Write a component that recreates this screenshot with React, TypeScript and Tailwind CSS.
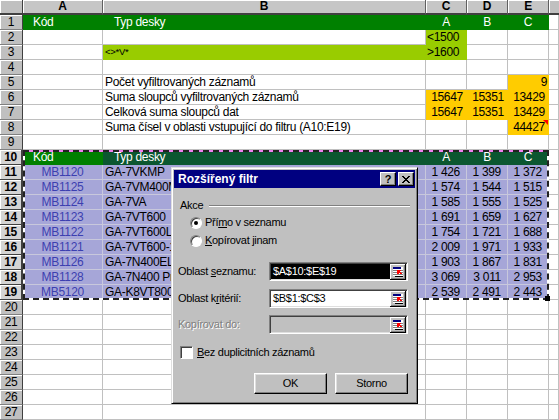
import React from "react";

type Cell = { t?: React.ReactNode; c?: string; tri?: boolean };

const WH = "bg-white border-[#c0c0c0]";
const GR = "bg-[#008000] border-[#008000] text-white";
const SG = "bg-[#0b5730] border-[#0b5730] text-white";
const LG = "bg-[#99cc00] border-[#99cc00]";
const OR = "bg-[#ffcc00] border-[#ffcc00]";
const LV = "bg-[#a6a6d8] border-[#c8c8dc]";

const cellBase =
  "relative h-[15px] border-r border-b whitespace-nowrap overflow-hidden leading-[14px]";

const w = (): Cell => ({ c: WH });

const data: string[][] = [
  ["MB1120", "GA-7VKMP", "1 426", "1 399", "1 372"],
  ["MB1125", "GA-7VM400M", "1 574", "1 544", "1 515"],
  ["MB1124", "GA-7VA", "1 585", "1 555", "1 525"],
  ["MB1123", "GA-7VT600", "1 691", "1 659", "1 627"],
  ["MB1122", "GA-7VT600L", "1 754", "1 721", "1 688"],
  ["MB1121", "GA-7VT600-1", "2 009", "1 971", "1 933"],
  ["MB1126", "GA-7N400EL", "1 903", "1 867", "1 831"],
  ["MB1128", "GA-7N400 Pro", "3 069", "3 011", "2 953"],
  ["MB5120", "GA-K8VT800", "2 539", "2 491", "2 443"],
];

function buildRows(): Record<number, Cell[]> {
  const r: Record<number, Cell[]> = {};
  for (let i = 1; i <= 27; i++) r[i] = [w(), w(), w(), w(), w(), w()];
  r[1] = [
    { t: "Kód", c: `${GR} pl-[10px]` },
    { t: "Typ desky", c: `${GR} pl-[11px]` },
    { t: "A", c: `${GR} text-center` },
    { t: "B", c: `${GR} text-center` },
    { t: "C", c: `${GR} text-center` },
    w(),
  ];
  r[2] = [w(), w(), { t: "<1500", c: `${LG} pl-[1px]` }, w(), w(), w()];
  r[3] = [
    w(),
    { t: "<>*V*", c: `${LG} pl-[2px] text-[9.5px]` },
    { t: ">1600", c: `${LG} pl-[1px]` },
    w(),
    w(),
    w(),
  ];
  r[5] = [w(), { t: "Počet vyfiltrovaných záznamů", c: `${WH} pl-[2px]` }, w(), w(), { t: "9", c: `${OR} text-right pr-[1px]` }, w()];
  r[6] = [
    w(),
    { t: "Suma sloupců vyfiltrovaných záznamů", c: `${WH} pl-[2px]` },
    { t: "15647", c: `${OR} text-right pr-[3px]` },
    { t: "15351", c: `${OR} text-right pr-[3px]` },
    { t: "13429", c: `${OR} text-right pr-[3px]` },
    w(),
  ];
  r[7] = [
    w(),
    { t: "Celková suma sloupců dat", c: `${WH} pl-[2px]` },
    { t: "15647", c: `${OR} text-right pr-[3px]` },
    { t: "15351", c: `${OR} text-right pr-[3px]` },
    { t: "13429", c: `${OR} text-right pr-[3px]` },
    w(),
  ];
  r[8] = [
    w(),
    { t: "Suma čísel v oblasti vstupující do filtru (A10:E19)", c: `${WH} pl-[2px]` },
    w(),
    w(),
    { t: "44427", c: `${OR} text-right pr-[3px]`, tri: true },
    w(),
  ];
  r[10] = [
    { t: "Kód", c: `${GR} pl-[10px]` },
    { t: "Typ desky", c: `${SG} pl-[11px]` },
    { t: "A", c: `${SG} text-center` },
    { t: "B", c: `${SG} text-center` },
    { t: "C", c: `${SG} text-center` },
    w(),
  ];
  data.forEach((d, i) => {
    r[11 + i] = [
      { t: d[0], c: `${LV} text-center text-[#3c40b0]` },
      { t: d[1], c: `${LV} pl-[2px]` },
      { t: d[2], c: `${LV} text-right pr-[6px]` },
      { t: d[3], c: `${LV} text-right pr-[6px]` },
      { t: d[4], c: `${LV} text-right pr-[6px]` },
      w(),
    ];
  });
  return r;
}

function RowHead({ n, sel }: { n: number; sel?: boolean }) {
  return sel ? (
    <div className="h-[15px] bg-[#d4d4d4] border-r-2 border-b border-[#404040] shadow-[inset_1px_1px_0_#ffffff] text-center font-bold leading-[14px]">
      {n}
    </div>
  ) : (
    <div className="h-[15px] bg-[#c0c0c0] border-r border-b border-r-[#404040] border-b-[#808080] shadow-[inset_1px_1px_0_#ffffff] text-center leading-[14px]">
      {n}
    </div>
  );
}

function ColHead({ t }: { t: string }) {
  return (
    <div className="h-[15px] bg-[#c6c6c6] border-r border-b-2 border-r-[#606060] border-b-[#404040] shadow-[inset_1px_1px_0_#ffffff] text-center font-bold leading-[13px]">
      {t}
    </div>
  );
}

function RefIcon() {
  return (
    <svg width="16" height="16" viewBox="0 0 16 16" shapeRendering="crispEdges">
      <rect x="0" y="0" width="16" height="16" fill="#c0c0c0" />
      <rect x="0" y="0" width="15" height="1" fill="#ffffff" />
      <rect x="0" y="0" width="1" height="15" fill="#ffffff" />
      <rect x="15" y="0" width="1" height="16" fill="#000000" />
      <rect x="0" y="15" width="16" height="1" fill="#000000" />
      <rect x="1" y="14" width="14" height="1" fill="#808080" />
      <rect x="14" y="1" width="1" height="14" fill="#808080" />
      <rect x="3" y="3" width="10" height="9" fill="#ffffff" />
      <rect x="3" y="3" width="8" height="2" fill="#000080" />
      <rect x="3" y="6" width="10" height="1" fill="#808080" />
      <rect x="3" y="8" width="10" height="1" fill="#808080" />
      <rect x="3" y="10" width="10" height="1" fill="#808080" />
      <rect x="5" y="12" width="8" height="1" fill="#000000" />
      <path d="M7 6h4v1H9.5l2.5 2.5-1 1-2.5-2.5V10H7z" fill="#ff0000" />
    </svg>
  );
}

function Field({
  label,
  value,
  mode,
}: {
  label: React.ReactNode;
  value?: string;
  mode: "sel" | "norm" | "dis";
}) {
  const inner =
    mode === "sel" ? "bg-black text-white" : mode === "norm" ? "bg-white text-black" : "bg-[#c0c0c0]";
  return (
    <div className="flex items-center h-[19px]">
      <span
        className={`whitespace-nowrap ${mode === "dis" ? "text-[#808080] [text-shadow:1px_1px_0_#ffffff]" : ""}`}
      >
        {label}
      </span>
      <div className="ml-auto w-[139px] h-[19px] border border-t-[#808080] border-l-[#808080] border-r-white border-b-white shadow-[inset_1px_1px_0_#404040,inset_-1px_-1px_0_#dfdfdf] p-[1px] flex">
        <div className={`flex-1 flex items-center pl-[2px] ${inner}`}>{value}</div>
        <div className="w-[16px] h-[15px] bg-[#c0c0c0] flex">
          <RefIcon />
        </div>
      </div>
    </div>
  );
}

function Radio({ on, children }: { on?: boolean; children: React.ReactNode }) {
  return (
    <div className="flex items-center h-[13px] ml-[12px]">
      <div className="w-[12px] h-[12px] rounded-full bg-white border border-t-[#808080] border-l-[#808080] border-r-[#ffffff] border-b-[#ffffff] shadow-[inset_1px_1px_0_#404040] flex items-center justify-center">
        {on && <div className="w-[4px] h-[4px] rounded-full bg-black" />}
      </div>
      <span className="ml-[3px] whitespace-nowrap">{children}</span>
    </div>
  );
}

function WinButton({ children }: { children: React.ReactNode }) {
  return (
    <div className="w-[73px] h-[21px] bg-[#c0c0c0] border border-t-white border-l-white border-r-black border-b-black shadow-[inset_-1px_-1px_0_#808080,inset_1px_1px_0_#dfdfdf] flex items-center justify-center">
      {children}
    </div>
  );
}

function TitleBtn({ children }: { children: React.ReactNode }) {
  return (
    <div className="w-[16px] h-[14px] bg-[#c0c0c0] border border-t-white border-l-white border-r-black border-b-black shadow-[inset_-1px_-1px_0_#808080] flex items-center justify-center text-black font-bold text-[11px] leading-none">
      {children}
    </div>
  );
}

function Dialog() {
  return (
    <div className="absolute left-[171px] top-[167px] w-[247px] h-[237px] bg-[#c0c0c0] border border-t-[#dfdfdf] border-l-[#dfdfdf] border-r-black border-b-black shadow-[inset_1px_1px_0_#ffffff,inset_-1px_-1px_0_#808080] p-[2px] flex flex-col text-[11px] tracking-[-0.3px] text-black">
      <div className="h-[18px] shrink-0 bg-[#000080] flex items-center justify-between pl-[4px] pr-[1px]">
        <span className="text-white font-bold text-[12px] tracking-normal">Rozšířený filtr</span>
        <div className="flex gap-[2px]">
          <TitleBtn>?</TitleBtn>
          <TitleBtn>
            <svg width="8" height="7" viewBox="0 0 8 7" shapeRendering="crispEdges">
              <path d="M0 0h2v1h1v1h2V1h1V0h2v1H7v1H6v1H5v1h1v1h1v1h1v1H6V6H5V5H3v1H2v1H0V6h1V5h1V4h1V3H2V2H1V1H0z" fill="#000" />
            </svg>
          </TitleBtn>
        </div>
      </div>
      <div className="flex flex-col pl-[4px] pr-[7px]">
        <div className="mt-[11px] h-[13px] flex items-center ml-[2px] -mr-[2px]">
          <span>Akce</span>
          <div className="flex-1 ml-[6px] border-t border-t-[#808080] border-b border-b-white" />
        </div>
        <div className="mt-[4px]">
          <Radio on>
            Pří<span className="underline">m</span>o v seznamu
          </Radio>
        </div>
        <div className="mt-[5px]">
          <Radio>
            <span className="underline">K</span>opírovat jinam
          </Radio>
        </div>
        <div className="mt-[15px]">
          <Field
            label={
              <>
                Oblast <span className="underline">s</span>eznamu:
              </>
            }
            value="$A$10:$E$19"
            mode="sel"
          />
        </div>
        <div className="mt-[8px]">
          <Field
            label={
              <>
                Oblast k<span className="underline">r</span>itérií:
              </>
            }
            value="$B$1:$C$3"
            mode="norm"
          />
        </div>
        <div className="mt-[7px]">
          <Field label="Kopírovat do:" mode="dis" />
        </div>
        <div className="mt-[12px] h-[13px] flex items-center ml-[2px]">
          <div className="w-[13px] h-[13px] bg-white border border-t-[#808080] border-l-[#808080] border-r-white border-b-white shadow-[inset_1px_1px_0_#404040]" />
          <span className="ml-[4px] whitespace-nowrap">
            <span className="underline">B</span>ez duplicitních záznamů
          </span>
        </div>
        <div className="mt-[14px] flex justify-end gap-[8px]">
          <WinButton>OK</WinButton>
          <WinButton>Storno</WinButton>
        </div>
      </div>
    </div>
  );
}

export default function App() {
  const rows = buildRows();
  const rowNums = Array.from({ length: 27 }, (_, i) => i + 1);
  return (
    <div className="relative w-[559px] h-[420px] overflow-hidden bg-white font-['Liberation_Sans','Arial',sans-serif] text-[12px] tracking-[-0.3px] text-black">
      <div className="grid grid-cols-[23px_80px_323px_41px_41px_41px_10px] grid-rows-[repeat(28,15px)]">
        <div className="h-[15px] bg-[#c0c0c0] border-r border-b-2 border-r-[#404040] border-b-[#404040] shadow-[inset_1px_1px_0_#ffffff]" />
        <ColHead t="A" />
        <ColHead t="B" />
        <ColHead t="C" />
        <ColHead t="D" />
        <ColHead t="E" />
        <div className="h-[15px] bg-[#c0c0c0] border-b-2 border-b-[#404040] shadow-[inset_1px_1px_0_#ffffff]" />
        {rowNums.map((n) => (
          <React.Fragment key={n}>
            <RowHead n={n} sel={n >= 10 && n <= 19} />
            {rows[n].map((cell, j) => (
              <div key={j} className={`${cellBase} ${cell.c ?? WH}`}>
                {cell.t}
                {cell.tri && (
                  <div className="absolute top-0 right-0 w-0 h-0 border-l-[5px] border-l-transparent border-t-[5px] border-t-[#ff0000]" />
                )}
              </div>
            ))}
          </React.Fragment>
        ))}
      </div>

      {/* copy marquee */}
      <div className="absolute left-[23px] top-[150px] w-[526px] h-[150px] border-2 border-white border-t-[#f080f0]" />
      <div className="absolute left-[23px] top-[150px] w-[526px] h-[150px] border-2 border-dashed border-[#222222]" />
      <div className="absolute left-[545px] top-[296px] w-[5px] h-[5px] bg-black" />

      <Dialog />
    </div>
  );
}
